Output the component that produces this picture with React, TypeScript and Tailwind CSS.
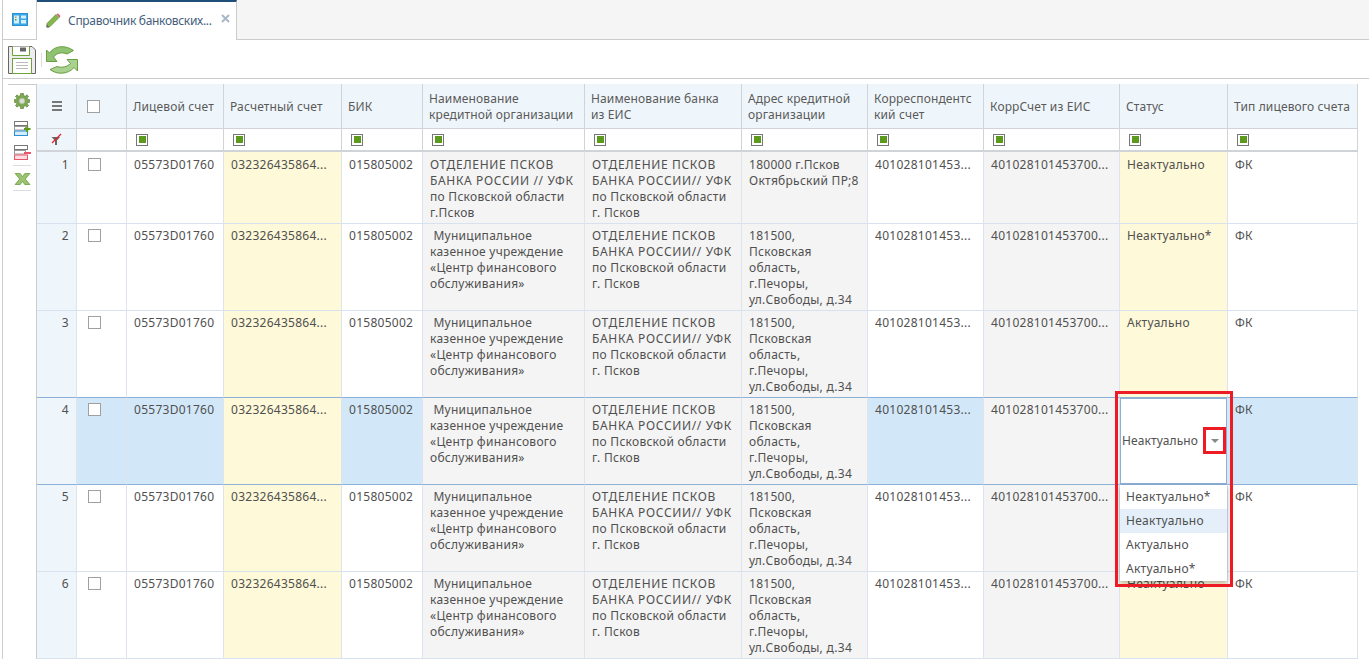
import React from "react";

const ADDR = "181500,\nПсковская\nобласть,\nг.Печоры,\nул.Свободы, д.34";
const ORG = "\u00a0Муниципальное\nказенное учреждение\n«Центр финансового\nобслуживания»";
const BANK = "ОТДЕЛЕНИЕ ПСКОВ\nБАНКА РОССИИ// УФК\nпо Псковской области\nг. Псков";

const rows = [
  { n: 1, org: "ОТДЕЛЕНИЕ ПСКОВ\nБАНКА РОССИИ // УФК\nпо Псковской области\nг.Псков", addr: "180000 г.Псков\nОктябрьский ПР;8", status: "Неактуально", h: "h-[72px]" },
  { n: 2, org: ORG, addr: ADDR, status: "Неактуально*", h: "h-[87px]" },
  { n: 3, org: ORG, addr: ADDR, status: "Актуально", h: "h-[87px]" },
  { n: 4, org: ORG, addr: ADDR, status: "Неактуально", h: "h-[87px]" },
  { n: 5, org: ORG, addr: ADDR, status: "Неактуально", h: "h-[87px]" },
  { n: 6, org: ORG, addr: ADDR, status: "Неактуально", h: "h-[87px]" },
];

const OPTIONS = ["Неактуально*", "Неактуально", "Актуально", "Актуально*"];
const HEADERS = [
  "Лицевой счет",
  "Расчетный счет",
  "БИК",
  "Наименование\nкредитной организации",
  "Наименование банка\nиз ЕИС",
  "Адрес кредитной\nорганизации",
  "Корреспондентс\nкий счет",
  "КоррСчет из ЕИС",
  "Статус",
  "Тип лицевого счета",
];
const WIDTHS = ["w-[40px]", "w-[50px]", "w-[97px]", "w-[118px]", "w-[81px]", "w-[162px]", "w-[157px]", "w-[126px]", "w-[116px]", "w-[136px]", "w-[108px]", "w-[130px]"];

// строки прописными в оригинале заметно шире
function Lines({ text }: { text: string }) {
  return (
    <>
      {text.split("\n").map((l, i) => (
        <div key={i} className={/^[А-Я /]+$/.test(l) ? "tracking-[0.65px]" : ""}>{l}</div>
      ))}
    </>
  );
}

function FilterBox() {
  return (
    <div className="w-[12px] h-[12px] ml-[2px] border border-[#777] bg-white flex items-center justify-center">
      <div className="w-[7px] h-[7px] bg-[#5c9a1e]" />
    </div>
  );
}

function Check({ className }: { className: string }) {
  return <div className={`w-[13px] h-[13px] border border-[#a0a0a0] bg-white ${className}`} />;
}

function BookIcon() {
  return (
    <svg width="16" height="14" viewBox="0 0 16 14" aria-hidden="true">
      <rect x="0.5" y="0.5" width="15" height="12" fill="#39a9e8" stroke="#2b8fd0" />
      <rect x="2" y="2.5" width="5" height="8" fill="#d8f0fb" />
      <rect x="9" y="2.5" width="5" height="3" fill="#d8f0fb" />
      <rect x="9" y="7" width="5" height="3.5" fill="#d8f0fb" />
      <rect x="3" y="3.5" width="1.5" height="1.5" fill="#e0902a" />
      <rect x="3" y="6" width="1.5" height="1.5" fill="#5c9a1e" />
    </svg>
  );
}

function PencilIcon() {
  return (
    <svg width="15" height="15" viewBox="0 0 15 15" aria-hidden="true">
      <path d="M1 10.5 L10 1.5 L13 4.5 L4 13.5 L1 14 Z" fill="#86b84e" stroke="#5c8a30" strokeWidth="0.8" />
      <path d="M10.5 1 L12 0.5 L14.5 3 L13.5 4.5 Z" fill="#e0527a" />
      <path d="M0.5 11.5 L3.5 14.5 L0.5 14.5 Z" fill="#666" />
    </svg>
  );
}

function SaveIcon() {
  return (
    <svg width="28" height="28" viewBox="0 0 28 28" aria-hidden="true">
      <path d="M0.5 0.5 H24 L27.5 4 V27.5 H0.5 Z" fill="#ededed" stroke="#666" />
      <path d="M4.5 0.5 V9.5 H21.5 V0.5" fill="#fff" stroke="#6fa23c" />
      <rect x="12" y="1.5" width="6" height="4" fill="#666" />
      <rect x="4.5" y="12.5" width="19" height="15" fill="#fff" stroke="#6fa23c" />
      <path d="M8 16.5 H20 M8 19.5 H20 M8 22.5 H20" stroke="#bbb" />
    </svg>
  );
}

function RefreshIcon() {
  return (
    <svg width="32" height="28" viewBox="0 0 32 28" aria-hidden="true">
      <path d="M0.5 4 L0.5 15.5 L11 15.5 L7.5 11 C11 6.5 16 6 21 8 L27.5 4.5 C20 -1 9 -1 3.5 7 Z" fill="#90c273" stroke="#5f9636" strokeWidth="0.9" />
      <path d="M31.5 25 L31.5 13.5 L21 13.5 L24.5 17.5 C21 21 16 22 11 20.5 L4 23.5 C11 29 22 28.5 28 21.5 Z" fill="#a9d190" stroke="#5f9636" strokeWidth="0.9" />
    </svg>
  );
}

function GearIcon() {
  return (
    <svg width="16" height="16" viewBox="0 0 16 16" aria-hidden="true">
      <path d="M6.5 0.5 H9.5 V2.5 L11.5 3.3 L12.8 1.8 L14.6 3.6 L13 5 L13.7 6.5 H15.5 V9.5 H13.7 L13 11 L14.6 12.4 L12.8 14.2 L11.5 12.7 L9.5 13.5 V15.5 H6.5 V13.5 L4.5 12.7 L3.2 14.2 L1.4 12.4 L3 11 L2.3 9.5 H0.5 V6.5 H2.3 L3 5 L1.4 3.6 L3.2 1.8 L4.5 3.3 L6.5 2.5 Z" fill="#7da655" stroke="#5f8a38" strokeWidth="0.7" />
      <circle cx="8" cy="8" r="2.8" fill="#dcdcdc" stroke="#a8c48c" strokeWidth="0.8" />
    </svg>
  );
}

function ListIcon({ color, sign }: { color: string; sign: "plus" | "minus" }) {
  return (
    <svg width="17" height="15" viewBox="0 0 17 15" aria-hidden="true">
      <rect x="0.5" y="0.5" width="13" height="4" fill="#fff" stroke="#777" />
      <rect x="0.5" y="5.5" width="11" height="3.5" fill="#fff" stroke="#999" />
      <rect x="0.5" y="10" width="13" height="4.5" fill={sign === "plus" ? "#d5ecfa" : "#fbdde2"} stroke={color} />
      {sign === "plus" ? (
        <path d="M10 8 H16.5 M13.2 5 V11" stroke="#5c9a1e" strokeWidth="2" />
      ) : (
        <path d="M10 8 H17" stroke={color} strokeWidth="2" />
      )}
    </svg>
  );
}

function ExcelIcon() {
  return (
    <svg width="17" height="12" viewBox="0 0 17 13" aria-hidden="true">
      <path d="M0.5 0.5 H6 L8.5 4 L11 0.5 H16.5 L11.5 6.5 L16.5 12.5 H11 L8.5 9 L6 12.5 H0.5 L5.5 6.5 Z" fill="#9cc46f" stroke="#5f9636" strokeWidth="0.8" />
    </svg>
  );
}

function FunnelOff() {
  return (
    <svg width="12" height="13" viewBox="0 0 12 13" aria-hidden="true">
      <path d="M0.5 4 H9 L6 7.5 V12 H4 V7.5 Z" fill="#666" />
      <path d="M1 10 L10 1" stroke="#e8202a" strokeWidth="1.2" />
    </svg>
  );
}

export default function App() {
  return (
    <div className="w-[1369px] h-[659px] overflow-hidden bg-white text-[12px] leading-[16px] text-[#505050] font-['Noto_Sans','Open_Sans',sans-serif]">
      <div className="ml-[2px] h-full border-l border-[#ccc] flex flex-col">
        {/* Вкладки */}
        <div className="h-[40px] flex shrink-0 bg-[#f5f5f5]">
          <div className="w-[34px] bg-white border-r border-b border-[#ccc] flex items-center justify-center">
            <BookIcon />
          </div>
          <div className="w-[200px] bg-white border-t-2 border-t-[#1f4e79] border-r border-r-[#ccc] flex items-center pl-[9px] pb-[1px]">
            <PencilIcon />
            <span className="ml-[7px] w-[146px] whitespace-nowrap text-[#44607c] tracking-[-0.3px]">Справочник банковских...</span>
            <svg width="9" height="9" viewBox="0 0 9 9" className="ml-[7px] -mt-[4px]" aria-hidden="true">
              <path d="M1 1 L8 8 M8 1 L1 8" stroke="#a9b7c6" strokeWidth="2" />
            </svg>
          </div>
          <div className="flex-1 border-b border-[#ccc]" />
        </div>

        {/* Панель */}
        <div className="h-[39px] shrink-0 border-b border-[#ccc] flex items-center pl-[5px] pt-[1px]">
          <SaveIcon />
          <div className="w-px h-[14px] bg-[#ddd] ml-[5px] mr-[4px]" />
          <RefreshIcon />
        </div>

        <div className="flex-1 flex pt-[5px] min-h-0">
          {/* Боковые кнопки */}
          <div className="w-[34px] shrink-0 border-r border-[#ccc]">
            <div className="ml-[5px] border-t border-[#ccc] flex flex-col items-center pt-[8px]">
              <GearIcon />
              <div className="mt-[12px] h-[15px]"><ListIcon color="#2b8fd0" sign="plus" /></div>
              <div className="mt-[9px] h-[15px]"><ListIcon color="#e8566a" sign="minus" /></div>
              <div className="w-[18px] h-px bg-[#ddd] mt-[5px]" />
              <div className="mt-[7px] h-[12px]"><ExcelIcon /></div>
              <div className="w-[18px] h-px bg-[#ddd] mt-[5px]" />
            </div>
          </div>

          {/* Таблица */}
          <div className="flex-1 min-w-0">
            <table className="table-fixed w-[1321px] border-separate border-spacing-0">
              <colgroup>
                {WIDTHS.map((w, i) => <col key={i} className={w} />)}
              </colgroup>
              <thead>
                <tr className="h-[45px] bg-[#eff6fb]">
                  <th className="border-r border-b border-[#d0d4d8] font-normal">
                    <div className="flex flex-col gap-[2px] w-[10px] ml-[15px]">
                      <div className="h-[2px] bg-[#777]" />
                      <div className="h-[2px] bg-[#777]" />
                      <div className="h-[2px] bg-[#777]" />
                    </div>
                  </th>
                  <th className="border-r border-b border-[#d0d4d8] font-normal">
                    <Check className="ml-[10px]" />
                  </th>
                  {HEADERS.map((h) => (
                    <th key={h} className="border-r border-b border-[#d0d4d8] font-normal text-left pl-[6px] pr-0 pt-[1px] whitespace-pre-line text-[#5a5a5a] tracking-[0.13px]">
                      {h}
                    </th>
                  ))}
                </tr>
                <tr className="h-[23px]">
                  <th className="border-r border-b-[2px] border-[#d0d4d8] bg-[#eff6fb] font-normal">
                    <div className="flex justify-center"><FunnelOff /></div>
                  </th>
                  <th className="border-r border-b-[2px] border-[#d0d4d8]" />
                  {HEADERS.map((h) => (
                    <th key={h} className="border-r border-b-[2px] border-[#d0d4d8] font-normal px-[7px]">
                      <FilterBox />
                    </th>
                  ))}
                </tr>
              </thead>
              <tbody>
                {rows.map((r) => {
                  const active = r.n === 4;
                  const line = active || r.n === 3 ? "border-b-[#8db0d8]" : "border-b-[#d7e2ee]";
                  const td = `align-top border-r border-r-[#dde4ec] border-b ${line} px-[7px] ${r.n === 1 ? "pt-[5px]" : "pt-[4px]"} whitespace-nowrap tracking-[0.27px]`;
                  const plain = active ? "bg-[#d2e8f9]" : "bg-white";
                  return (
                    <tr key={r.n} className={r.h}>
                      <td className={`${td} bg-[#eff6fb] text-right pr-[7px]`}>{r.n}</td>
                      <td className={`${td} ${plain}`}><Check className="ml-[4px] mt-[1px]" /></td>
                      <td className={`${td} ${plain}`}>05573D01760</td>
                      <td className={`${td} bg-[#fef9d8]`}>032326435864...</td>
                      <td className={`${td} ${plain}`}>015805002</td>
                      <td className={`${td} bg-[#f4f4f4]`}><Lines text={r.org} /></td>
                      <td className={`${td} bg-[#f4f4f4]`}><Lines text={BANK} /></td>
                      <td className={`${td} bg-[#f4f4f4]`}><Lines text={r.addr} /></td>
                      <td className={`${td} ${plain}`}>401028101453...</td>
                      <td className={`${td} bg-[#f4f4f4]`}>401028101453700...</td>
                      {active ? (
                        <td className={`align-top border-r border-r-[#dde4ec] border-b ${line} bg-white relative`}>
                          <div className="h-[86px] border border-[#8db0d8] flex items-center pl-[1px] tracking-[0.1px]">
                            <span>Неактуально</span>
                            <div className="ml-[13px] w-0 h-0 border-x-[4px] border-x-transparent border-t-[4px] border-t-[#888]" />
                          </div>
                          <div className="absolute left-0 top-[87px] w-[107px] bg-white shadow-[0_2px_5px_rgba(0,0,0,0.3)] z-10 tracking-[0.27px]">
                            {OPTIONS.map((o) => (
                              <div key={o} className={`h-[24px] leading-[24px] pl-[6px] ${o === "Неактуально" ? "bg-[#e4eff9]" : ""}`}>{o}</div>
                            ))}
                          </div>
                          <div className="absolute left-[-5px] top-[-7px] w-[118px] h-[196px] border-[3px] border-[#ed1c24] z-20" />
                          <div className="absolute left-[83px] top-[29px] w-[23px] h-[27px] border-[3px] border-[#ed1c24] z-20" />
                        </td>
                      ) : (
                        <td className={`${td} bg-[#fef9d8]`}>{r.status}</td>
                      )}
                      <td className={`${td} ${plain}`}>ФК</td>
                    </tr>
                  );
                })}
              </tbody>
            </table>
          </div>
        </div>
      </div>
    </div>
  );
}
